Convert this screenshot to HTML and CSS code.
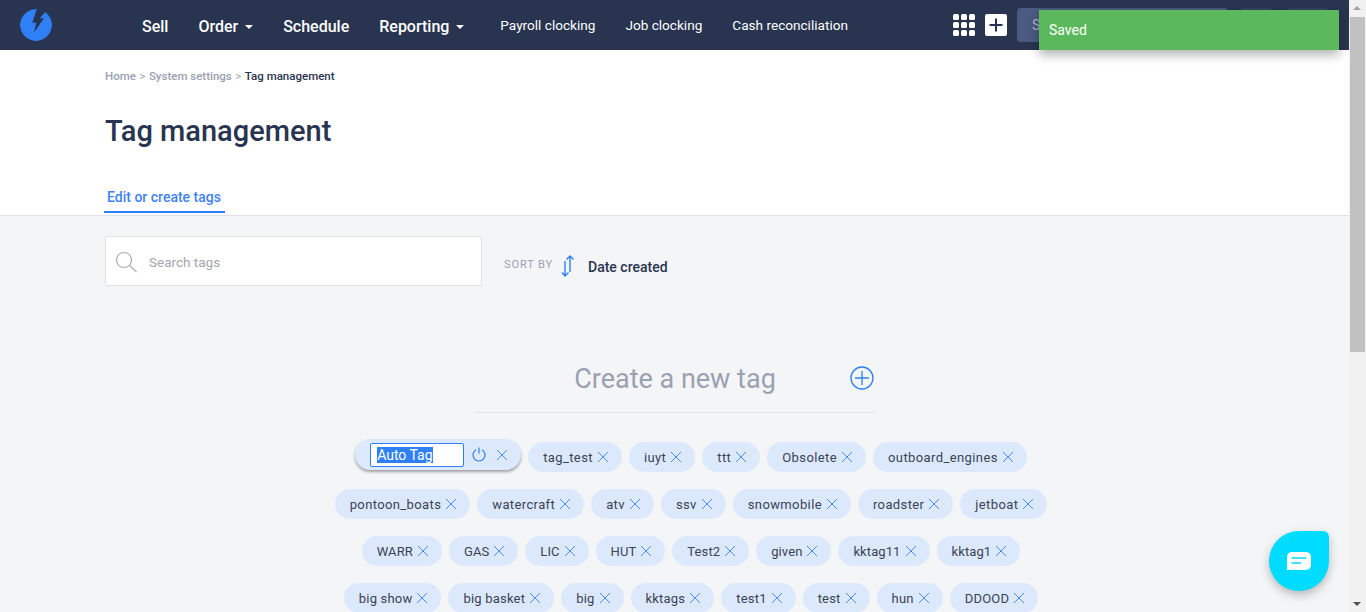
FILE: index.html
```html
<!DOCTYPE html>
<html lang="en">
<head>
  <meta charset="UTF-8">
  <meta name="viewport" content="width=device-width, initial-scale=1.0">
  <title>Tag management</title>
  <link rel="stylesheet" href="styles.css">
</head>
<body>

  <div class="page">
    <header class="topbar">
      <svg class="logo" width="32" height="32" viewBox="0 0 32 32">
        <circle cx="16" cy="16" r="16" fill="#2f80f6"/>
        <path d="M17 -1L12.300 13.700H16.300L14 23.500L24 9.300H19.700L27 1Z" fill="#283450"/>
      </svg>
      <nav class="mainnav">
        <a href="#">Sell</a>
        <a href="#">Order <span class="caret"></span></a>
        <a href="#">Schedule</a>
        <a href="#">Reporting <span class="caret"></span></a>
      </nav>
      <nav class="subnav">
        <a href="#">Payroll clocking</a>
        <a href="#">Job clocking</a>
        <a href="#">Cash reconciliation</a>
      </nav>
      <div class="topbar-right">
        <div class="apps">
          <i></i><i></i><i></i><i></i><i></i><i></i><i></i><i></i><i></i>
        </div>
        <svg class="add" width="22" height="22" viewBox="0 0 22 22">
          <rect width="22" height="22" rx="2" fill="#fff"/>
          <path d="M11 4.500V17.500M4.500 11H17.500" stroke="#283450" stroke-width="2"/>
        </svg>
        <div class="globalsearch">S</div>
        <div class="topbtn small"></div>
        <div class="topbtn"></div>
      </div>
    </header>

    <section class="head">
      <div class="crumbs">
        <a href="#">Home</a><span class="sep">&gt;</span><a href="#">System settings</a><span class="sep">&gt;</span><span class="current">Tag management</span>
      </div>
      <h1>Tag management</h1>
      <div class="tabs">
        <a href="#" class="tab">Edit or create tags</a>
      </div>
    </section>

    <main class="content">
      <div class="toolbar">
        <div class="searchbox">
          <svg width="22" height="22" viewBox="0 0 22 22" fill="none" stroke="#a9adb5" stroke-width="1.2">
            <circle cx="9" cy="9" r="7.500"/>
            <path d="M14.500 14.500L21.500 21"/>
          </svg>
          <span>Search tags</span>
        </div>
        <span class="sortlabel">SORT BY</span>
        <svg class="sorticon" width="14" height="22" viewBox="0 0 14 22" fill="none" stroke="#2f80f6" stroke-width="1.4">
          <path d="M9 1V17M5.500 4.500L9 1L12.500 4.500"/>
          <path d="M4 6V21M1 17.500L4 21L7.500 17.500"/>
        </svg>
        <span class="sortvalue">Date created</span>
      </div>

      <div class="newtag">
        <span>Create a new tag</span>
        <svg class="plus" width="24" height="24" viewBox="0 0 24 24" fill="none" stroke="#2f80f6" stroke-width="1.3">
          <circle cx="12" cy="12" r="11"/>
          <path d="M12 5V19M5 12H19"/>
        </svg>
      </div>

      <div class="tagrow first">
        <div class="tag editing">
          <div class="tagedit"><span>Auto Tag</span></div>
          <svg class="power" width="14" height="15" viewBox="0 0 14 15" fill="none" stroke="#2f80f6" stroke-width="1.2">
            <path d="M4 2.800A6 6 0 1 0 10 2.800M7 0.500V6.500"/>
          </svg>
          <svg class="x" viewBox="0 0 10 10"><path d="M0 0L10 10M10 0L0 10"/></svg>
        </div>
        <div class="tag">tag_test<svg class="x" viewBox="0 0 10 10"><path d="M0 0L10 10M10 0L0 10"/></svg></div>
        <div class="tag">iuyt<svg class="x" viewBox="0 0 10 10"><path d="M0 0L10 10M10 0L0 10"/></svg></div>
        <div class="tag">ttt<svg class="x" viewBox="0 0 10 10"><path d="M0 0L10 10M10 0L0 10"/></svg></div>
        <div class="tag">Obsolete<svg class="x" viewBox="0 0 10 10"><path d="M0 0L10 10M10 0L0 10"/></svg></div>
        <div class="tag">outboard_engines<svg class="x" viewBox="0 0 10 10"><path d="M0 0L10 10M10 0L0 10"/></svg></div>
      </div>
      <div class="tagrow wide">
        <div class="tag">pontoon_boats<svg class="x" viewBox="0 0 10 10"><path d="M0 0L10 10M10 0L0 10"/></svg></div>
        <div class="tag">watercraft<svg class="x" viewBox="0 0 10 10"><path d="M0 0L10 10M10 0L0 10"/></svg></div>
        <div class="tag">atv<svg class="x" viewBox="0 0 10 10"><path d="M0 0L10 10M10 0L0 10"/></svg></div>
        <div class="tag">ssv<svg class="x" viewBox="0 0 10 10"><path d="M0 0L10 10M10 0L0 10"/></svg></div>
        <div class="tag">snowmobile<svg class="x" viewBox="0 0 10 10"><path d="M0 0L10 10M10 0L0 10"/></svg></div>
        <div class="tag">roadster<svg class="x" viewBox="0 0 10 10"><path d="M0 0L10 10M10 0L0 10"/></svg></div>
        <div class="tag">jetboat<svg class="x" viewBox="0 0 10 10"><path d="M0 0L10 10M10 0L0 10"/></svg></div>
      </div>
      <div class="tagrow tight">
        <div class="tag">WARR<svg class="x" viewBox="0 0 10 10"><path d="M0 0L10 10M10 0L0 10"/></svg></div>
        <div class="tag">GAS<svg class="x" viewBox="0 0 10 10"><path d="M0 0L10 10M10 0L0 10"/></svg></div>
        <div class="tag">LIC<svg class="x" viewBox="0 0 10 10"><path d="M0 0L10 10M10 0L0 10"/></svg></div>
        <div class="tag">HUT<svg class="x" viewBox="0 0 10 10"><path d="M0 0L10 10M10 0L0 10"/></svg></div>
        <div class="tag">Test2<svg class="x" viewBox="0 0 10 10"><path d="M0 0L10 10M10 0L0 10"/></svg></div>
        <div class="tag">given<svg class="x" viewBox="0 0 10 10"><path d="M0 0L10 10M10 0L0 10"/></svg></div>
        <div class="tag">kktag11<svg class="x" viewBox="0 0 10 10"><path d="M0 0L10 10M10 0L0 10"/></svg></div>
        <div class="tag">kktag1<svg class="x" viewBox="0 0 10 10"><path d="M0 0L10 10M10 0L0 10"/></svg></div>
      </div>
      <div class="tagrow">
        <div class="tag">big show<svg class="x" viewBox="0 0 10 10"><path d="M0 0L10 10M10 0L0 10"/></svg></div>
        <div class="tag">big basket<svg class="x" viewBox="0 0 10 10"><path d="M0 0L10 10M10 0L0 10"/></svg></div>
        <div class="tag">big<svg class="x" viewBox="0 0 10 10"><path d="M0 0L10 10M10 0L0 10"/></svg></div>
        <div class="tag">kktags<svg class="x" viewBox="0 0 10 10"><path d="M0 0L10 10M10 0L0 10"/></svg></div>
        <div class="tag">test1<svg class="x" viewBox="0 0 10 10"><path d="M0 0L10 10M10 0L0 10"/></svg></div>
        <div class="tag">test<svg class="x" viewBox="0 0 10 10"><path d="M0 0L10 10M10 0L0 10"/></svg></div>
        <div class="tag">hun<svg class="x" viewBox="0 0 10 10"><path d="M0 0L10 10M10 0L0 10"/></svg></div>
        <div class="tag">DDOOD<svg class="x" viewBox="0 0 10 10"><path d="M0 0L10 10M10 0L0 10"/></svg></div>
      </div>
    </main>
  </div>

  <div class="scrollbar">
    <div class="arrow up"></div>
    <div class="thumb"></div>
    <div class="arrow down"></div>
  </div>

  <div class="toast">Saved</div>

  <div class="chat">
    <svg width="24" height="18" viewBox="0 0 24 18">
      <path d="M5 0H19A5 5 0 0 1 24 5V13A5 5 0 0 1 19 18H0V5A5 5 0 0 1 5 0Z" fill="#fff"/>
      <path d="M4.500 6H19.500" stroke="#00dcff" stroke-width="1.500"/>
      <path d="M4.500 11H14" stroke="#00dcff" stroke-width="1.500"/>
    </svg>
  </div>

</body>
</html>
```
FILE: styles.css
```css
* {
  box-sizing: border-box;
}

html, body {
  height: 100%;
}

body {
  font-family: Roboto, "Liberation Sans", sans-serif;
  background-color: #f4f5f7;
  color: #283450;
  margin: 0;
  display: flex;
  overflow: hidden;
}

a {
  color: inherit;
  text-decoration: none;
}

.page {
  flex: 1;
  min-width: 0;
  height: 100vh;
  overflow: hidden;
}

/* top bar */
.topbar {
  height: 50px;
  background-color: #283450;
  color: #fff;
  display: flex;
  align-items: center;
  padding: 0 20px;
}

.logo {
  overflow: hidden;
  border-radius: 50%;
  margin-right: 90px;
}

.mainnav {
  display: flex;
  gap: 30px;
  font-size: 16px;
  font-weight: 500;
  margin-right: 35px;
  padding-top: 3px;
}

.caret {
  display: inline-block;
  width: 0;
  height: 0;
  margin-left: 3px;
  vertical-align: 3px;
  border-left: 4px solid transparent;
  border-right: 4px solid transparent;
  border-top: 4px solid #fff;
}

.subnav {
  display: flex;
  gap: 30px;
  font-size: 13.6px;
  margin-left: 1px;
}

.topbar-right {
  margin-left: auto;
  display: flex;
  align-items: center;
}

.apps {
  display: grid;
  grid-template-columns: repeat(3, 6px);
  gap: 2px;
  margin-right: 10px;
}

.apps i {
  height: 6px;
  border-radius: 1.500px;
  background-color: #fff;
}

.add {
  margin-right: 10px;
}

.globalsearch {
  width: 211px;
  height: 34px;
  line-height: 34px;
  padding-left: 15px;
  border-radius: 4px;
  background-color: #4a5a80;
  color: #aab3c8;
  font-size: 14px;
  margin-right: 12px;
}

.topbtn {
  width: 43px;
  height: 34px;
  border-radius: 4px;
  background-color: #35425f;
}

.topbtn.small {
  width: 33px;
  margin-right: 13px;
}

/* title block */
.head {
  background-color: #fff;
  height: 166px;
  border-bottom: 1px solid #dfe1e6;
  padding: 18px 0 0 105px;
}

.crumbs {
  font-size: 11.500px;
  line-height: 16px;
  color: #9aa1b1;
  font-weight: 500;
}

.sep {
  margin: 0 3.500px;
  font-weight: 400;
}

.current {
  color: #283450;
}

h1 {
  font-size: 29px;
  font-weight: 500;
  line-height: 36px;
  margin: 29px 0 0;
}

.tabs {
  margin: 31px 0 0 -1px;
}

.tab {
  display: inline-block;
  height: 33px;
  padding: 9px 4px 0 3px;
  font-size: 14px;
  font-weight: 500;
  color: #3f82f7;
  border-bottom: 2px solid #2f80f6;
}

/* toolbar */
.content {
  padding: 20px 72px 0 105px;
}

.toolbar {
  display: flex;
  align-items: center;
  height: 50px;
}

.searchbox {
  width: 377px;
  height: 50px;
  background-color: #fff;
  border: 1px solid #dfe1e6;
  border-radius: 2px;
  display: flex;
  align-items: center;
  gap: 12px;
  padding: 1px 0 0 9px;
  font-size: 13.500px;
  color: #a3a7ae;
  margin-right: 22px;
}

.sortlabel {
  font-size: 11px;
  letter-spacing: 0.9px;
  color: #9aa1b1;
  margin: 6px 8px 0 0;
}

.sorticon {
  margin: 10px 13px 0 0;
}

.sortvalue {
  font-size: 14px;
  font-weight: 500;
  margin-top: 11px;
}

/* new tag field */
.newtag {
  width: 400px;
  height: 60px;
  margin: 67px 0 0 370px;
  border-bottom: 1px solid #dfe1e6;
  position: relative;
  text-align: center;
  font-size: 27px;
  line-height: 52px;
  color: #9aa1b1;
}

.plus {
  position: absolute;
  right: 1px;
  top: 13px;
}

/* tags */
.tagrow {
  display: flex;
  justify-content: center;
  align-items: center;
  gap: 7px;
  margin-top: 17px;
}

.tagrow.first {
  margin-top: 29px;
  height: 30px;
}

.tag {
  height: 30px;
  display: flex;
  align-items: center;
  gap: 5px;
  padding: 0 14px 0 15px;
  border-radius: 15px;
  background-color: #dce9fd;
  font-size: 13px;
  letter-spacing: 0.2px;
  color: #3a4354;
  white-space: nowrap;
}

.tagrow.first .tag {
  letter-spacing: 0.4px;
}

.tagrow.wide .tag {
  letter-spacing: 0.38px;
}

.tagrow.tight .tag {
  letter-spacing: 0.1px;
}

.x {
  width: 10px;
  height: 10px;
  fill: none;
  stroke: #4a8df8;
  stroke-width: 1;
}

.tag.editing {
  height: 31px;
  margin-bottom: 5px;
  border-radius: 16px;
  padding: 0 14px 0 15px;
  gap: 0;
  box-shadow: 0 2px 3px rgba(0, 0, 0, 0.35);
}

.tagedit {
  width: 94px;
  height: 24px;
  background-color: #fff;
  border: 1px solid #2f80f6;
  border-radius: 2px;
  padding-left: 6px;
  line-height: 22px;
  font-size: 14px;
  letter-spacing: 0;
}

.tagedit span {
  display: inline-block;
  background-color: #2f80f6;
  color: #fff;
  line-height: 16px;
}

.power {
  margin: 0 11px 0 8px;
}

/* page scrollbar */
.scrollbar {
  width: 17px;
  height: 100vh;
  background-color: #f1f1f1;
  display: flex;
  flex-direction: column;
  align-items: center;
  flex: none;
}

.arrow {
  height: 17px;
  width: 17px;
  flex: none;
  position: relative;
}

.arrow.up::after,
.arrow.down::after {
  content: "";
  position: absolute;
  left: 4px;
  border-left: 4px solid transparent;
  border-right: 4px solid transparent;
}

.arrow.up::after {
  top: 6px;
  border-bottom: 4px solid #a3a3a3;
}

.arrow.down::after {
  top: 7px;
  border-top: 4px solid #505050;
}

.thumb {
  width: 15px;
  height: 335px;
  background-color: #c1c1c1;
  margin-bottom: auto;
}

/* overlays */
.toast {
  position: absolute;
  left: 1039px;
  top: 10px;
  width: 300px;
  height: 40px;
  padding-left: 10px;
  line-height: 40px;
  font-size: 14px;
  color: #fff;
  background-color: #5cb85c;
  box-shadow: 0 5px 10px rgba(0, 0, 0, 0.3);
}

.chat {
  position: absolute;
  left: 1269px;
  top: 531px;
  width: 60px;
  height: 60px;
  border-radius: 50% 6px 50% 50%;
  background-color: #00dcff;
  box-shadow: 0 4px 10px rgba(0, 0, 0, 0.25);
  display: flex;
  align-items: center;
  justify-content: center;
}
```
